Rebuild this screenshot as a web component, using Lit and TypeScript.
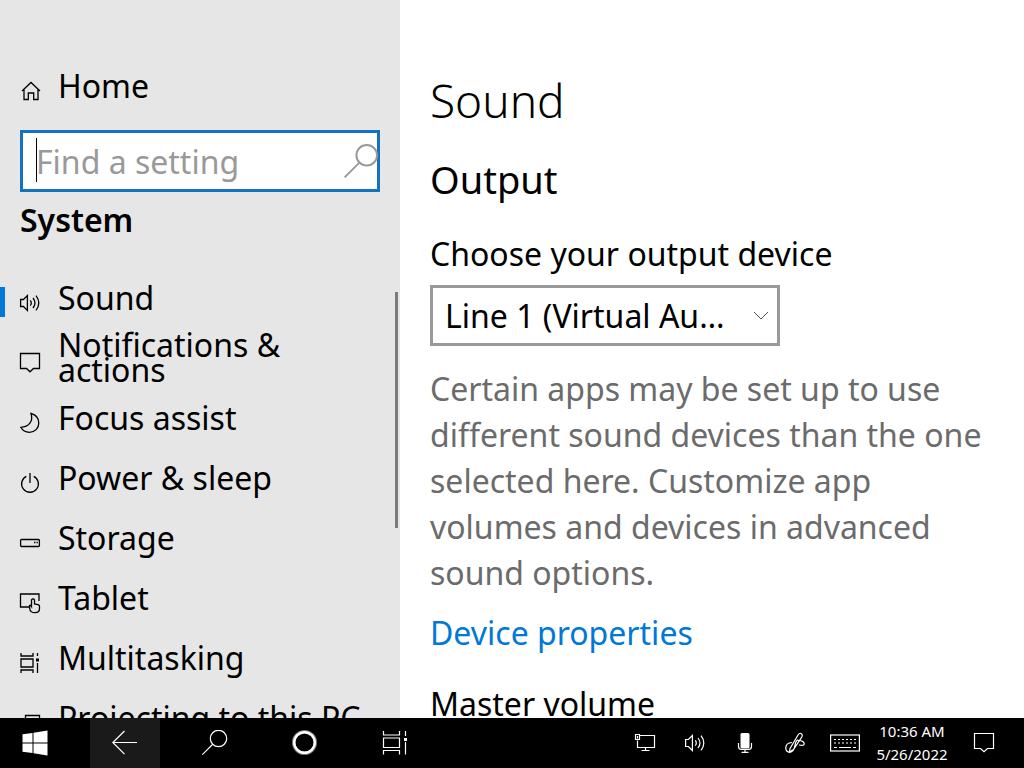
import { LitElement, html, css, svg, TemplateResult } from "lit";
import { customElement } from "lit/decorators.js";

type Icon = TemplateResult;

const icons: Record<string, Icon> = {
  home: svg`<path d="M3 11 12 2.500l9 8.500M5 9.500V19.500h4.300v-6.500h5.400v6.500H19V9.500"/>`,
  sound: svg`<path d="M1.600 7.500v7h2.800l4 4V3.500l-4 4zM11.300 8.300q2 2.700 0 5.400M14 6q4 5 0 10M17 3.600q5.600 7.400 0 14.800"/>`,
  message: svg`<path d="M1.500 1.500h19v15h-6l-3.500 3.300-3.500-3.300h-6z"/>`,
  moon: svg`<path d="M12 1.500c5 1.300 7.800 5 7.800 9.500 0 5.300-4 9.300-9.300 9.300-3.800 0-7-1.800-8.700-5C10 15 14.500 9 12 1.500z"/>`,
  power: svg`<path d="M11 1v10M7.300 4.300a8.400 8.400 0 1 0 7.400 0"/>`,
  storage: svg`<rect x="1.600" y="7.500" width="18.800" height="7" rx="1"/><path d="M15 10.500h1.500M17.500 10.500h1.300"/>`,
  tablet: svg`<path d="M10.500 15H1.500V2h18.500v7M12.500 14.500V7.800q1.500-2 3 0V12l3.500.7q1.500.4 1.500 1.800v2q0 4.200-4.700 4.200t-5.100-4.200l-.2-3q1-.8 2 1z"/>`,
  tasks: svg`<path d="M2 1v3h12V1M2 21v-3h12v3M2 7h12v8H2zM18.500 1v3M18.500 11v10"/><rect class="solid" x="17" y="6.500" width="3" height="3"/>`,
  monitor: svg`<path d="M6.500 8V3.500h14v12h-8M1.500 8h8v11h-8z"/>`,
  search: svg`<circle cx="14.500" cy="7.500" r="6.300"/><path d="M10 12 1 21"/>`,
};

const icon = (name: string) =>
  html`<svg class="icon" viewBox="0 0 22 22" aria-hidden="true">${icons[name]}</svg>`;

const navItems = [
  { label: "Sound", icon: "sound", current: true },
  { label: "Notifications & actions", icon: "message" },
  { label: "Focus assist", icon: "moon" },
  { label: "Power & sleep", icon: "power" },
  { label: "Storage", icon: "storage" },
  { label: "Tablet", icon: "tablet" },
  { label: "Multitasking", icon: "tasks" },
  { label: "Projecting to this PC", icon: "monitor" },
];

const iconStyles = css`
  * { box-sizing: border-box; }
  svg {
    display: block;
    flex: none;
    fill: none;
    stroke: currentColor;
    stroke-width: 1.3;
  }
  .icon { width: 22px; height: 22px; }
  .solid { fill: currentColor; stroke: none; }
`;

@customElement("settings-nav")
class SettingsNav extends LitElement {
  static styles = [
    iconStyles,
    css`
      :host {
        display: block;
        position: relative;
        overflow: hidden;
        background: #e6e6e6;
        padding-top: 56px;
      }
      .link {
        display: flex;
        align-items: center;
        gap: 17px;
        min-height: 60px;
        padding: 0 30px 0 19px;
        color: #000;
        text-decoration: none;
        line-height: 25px;
      }
      .link .label { margin-bottom: 10px; }
      .link .icon { margin-top: 2px; }
      .home { padding-top: 8px; }
      .search {
        display: flex;
        align-items: center;
        position: relative;
        margin: 14px 20px 0;
        height: 62px;
        border: 3px solid #1473c0;
        background: #fff;
      }
      .search input {
        flex: 1;
        min-width: 0;
        height: 100%;
        border: 0;
        outline: 0;
        padding: 0 0 0 13px;
        background: none;
        font: inherit;
        color: #000;
      }
      .search input::placeholder { color: #999; opacity: 1; }
      .search .icon { width: 36px; height: 36px; stroke-width: 1.2; color: #999; margin-right: -2px; }
      .caret {
        position: absolute;
        left: 13px;
        top: 5px;
        width: 1px;
        height: 44px;
        background: #000;
      }
      h2 {
        margin: 5px 20px 29px;
        font-size: 32px;
        font-weight: 600;
        line-height: 46px;
      }
      ul { list-style: none; margin: 0; padding: 0; }
      .item { position: relative; }
      .current::before {
        content: "";
        position: absolute;
        left: 0;
        top: 15px;
        width: 5px;
        height: 30px;
        background: #0078d7;
      }
      .thumb {
        position: absolute;
        right: 2px;
        top: 292px;
        width: 3px;
        height: 236px;
        background: #7a7a7a;
      }
    `,
  ];

  render() {
    return html`
      <a class="link home" href="#home">${icon("home")}<span class="label">Home</span></a>
      <div class="search">
        <input type="text" aria-label="Find a setting" placeholder="Find a setting" />
        <span class="caret"></span>
        ${icon("search")}
      </div>
      <h2>System</h2>
      <ul>
        ${navItems.map(
          (n) => html`<li class="item ${n.current ? "current" : ""}">
            <a class="link" href="#${n.icon}">${icon(n.icon)}<span class="label">${n.label}</span></a>
          </li>`
        )}
      </ul>
      <span class="thumb"></span>
    `;
  }
}

@customElement("sound-page")
class SoundPage extends LitElement {
  static styles = [
    iconStyles,
    css`
      :host {
        display: block;
        overflow: hidden;
        background: #fff;
        padding: 67px 30px 0;
      }
      h1 { margin: 0; font-size: 46px; font-weight: 300; line-height: 66px; }
      h2 { margin: 18px 0 0; font-size: 38px; font-weight: 400; line-height: 56px; }
      .label { display: block; margin-top: 24px; line-height: 46px; }
      .select {
        display: flex;
        align-items: center;
        position: relative;
        width: 350px;
        max-width: 100%;
        height: 61px;
        margin-top: 8px;
      }
      select {
        appearance: none;
        width: 100%;
        height: 100%;
        border: 3px solid #999;
        border-radius: 0;
        background: #fff;
        padding: 0 50px 0 12px;
        font: inherit;
        color: #000;
        text-overflow: ellipsis;
        overflow: hidden;
        white-space: nowrap;
      }
      .chevron {
        position: absolute;
        right: 11px;
        width: 16px;
        height: 10px;
        color: #555;
        pointer-events: none;
        stroke-width: 1;
      }
      p { margin: 20px 0 0; line-height: 46px; color: #6b6b6b; }
      .link { display: block; margin-top: 14px; line-height: 46px; color: #0078d7; text-decoration: none; }
      h3 { margin: 25px 0 0; font-size: 32px; font-weight: 400; line-height: 46px; }
    `,
  ];

  render() {
    return html`
      <h1>Sound</h1>
      <h2>Output</h2>
      <label class="label" for="device">Choose your output device</label>
      <div class="select">
        <select id="device">
          <option>Line 1 (Virtual Audio Cable)</option>
        </select>
        <svg class="chevron" viewBox="0 0 16 10" aria-hidden="true"><path d="M1 1l7 7 7-7" /></svg>
      </div>
      <p>
        Certain apps may be set up to use different sound devices than the one selected here.
        Customize app volumes and devices in advanced sound options.
      </p>
      <a class="link" href="#properties">Device properties</a>
      <h3>Master volume</h3>
    `;
  }
}

@customElement("task-bar")
class TaskBar extends LitElement {
  static styles = [
    iconStyles,
    css`
      :host {
        display: flex;
        justify-content: space-between;
        height: 50px;
        background: #000;
        color: #fff;
      }
      .group { display: flex; }
      button {
        display: flex;
        align-items: center;
        justify-content: center;
        height: 50px;
        padding: 0;
        border: 0;
        background: none;
        color: inherit;
        font: inherit;
      }
      .app { width: 70px; margin-right: 20px; }
      .app svg { width: 26px; height: 26px; }
      .back { background: #1a1a1a; }
      .tray { width: 50px; }
      .clock {
        width: 84px;
        flex-direction: column;
        font-size: 15px;
        line-height: 23px;
      }
      .center { width: 60px; margin-right: 10px; }
      svg { stroke-width: 1.2; }
    `,
  ];

  render() {
    return html`
      <div class="group">
        <button class="app" aria-label="Start">
          <svg viewBox="0 0 26 26"><path class="solid" d="M.5 4.300 10.500 3v9.500H.5zM11.500 2.800 25.500.5v12h-14zM.5 13.500h10V23L.5 21.700zM11.500 13.500h14v12l-14-2.300z" /></svg>
        </button>
        <button class="app back" aria-label="Back">
          <svg viewBox="0 0 26 26"><path d="M25 12.500H.8M12.500 1 .8 12.500l11.700 11.700" /></svg>
        </button>
        <button class="app" aria-label="Search">
          <svg viewBox="0 0 26 26"><circle cx="16.500" cy="8.500" r="8.200" /><path d="M10.500 14.500.3 24.700" /></svg>
        </button>
        <button class="app" aria-label="Cortana">
          <svg viewBox="0 0 26 26"><circle cx="12.500" cy="12.500" r="10.800" stroke-width="3.600" stroke-opacity=".45" /><circle cx="12.500" cy="12.500" r="10.300" stroke-width="2.400" /></svg>
        </button>
        <button class="app" aria-label="Task view">
          <svg viewBox="0 0 26 26"><path d="M1.500 1v4h16V1M1.500 24.500v-4h16v4M1.500 8h16v9.500h-16zM23.500 1v5M23.500 12v12.500" /><rect class="solid" x="22" y="8" width="3" height="3" /></svg>
        </button>
      </div>
      <div class="group">
        <button class="tray" aria-label="Network">
          <svg class="icon" viewBox="0 0 22 22"><path d="M6 3.500h14.500v12H3.500V8.500M11.500 15.500v3M7.500 18.500h8M1.500 2.500v5h4v-5zM3.500 4v2.500" /></svg>
        </button>
        <button class="tray" aria-label="Volume">${icon("sound")}</button>
        <button class="tray" aria-label="Microphone">
          <svg class="icon" viewBox="0 0 22 22"><rect class="solid" x="6.500" y="1" width="9" height="15.500" rx="1.500" /><path d="M4.500 11v3.500q0 3 3 3h7q3 0 3-3V11M11 17.500V20.500M7.500 20.300h7" /></svg>
        </button>
        <button class="tray" aria-label="Pen">
          <svg class="icon" viewBox="0 0 22 22"><path d="M6 16.500 14.500 2.300q1.500-1.800 3-.5t.4 3L9.500 17.500 5.500 20zM8 10.500q-6 .5-6.200 5T6 20.300q4-1 5-7t3.500-5q5.500.5 5.700 3.200t-5.200 1.500" /></svg>
        </button>
        <button class="tray" aria-label="Touch keyboard">
          <svg width="30" height="20" viewBox="0 0 30 20"><rect x=".6" y="2" width="28.800" height="16" /><path d="M4 6.500h22M4 10h22" stroke-dasharray="2 2" /><path d="M4 14.500h3M9 14.500h12M23 14.500h3" /></svg>
        </button>
        <button class="clock"><span>10:36 AM</span><span>5/26/2022</span></button>
        <button class="center" aria-label="Notifications">${icon("message")}</button>
      </div>
    `;
  }
}

@customElement("app-root")
class AppRoot extends LitElement {
  static styles = css`
    :host {
      display: grid;
      grid-template: minmax(0, 1fr) auto / 400px minmax(0, 1fr);
      height: 100vh;
      font: 32px "Noto Sans", "Open Sans", sans-serif;
      color: #000;
    }
    task-bar { grid-column: 1 / -1; }
  `;

  render() {
    return html`
      <settings-nav></settings-nav>
      <sound-page></sound-page>
      <task-bar></task-bar>
    `;
  }
}
